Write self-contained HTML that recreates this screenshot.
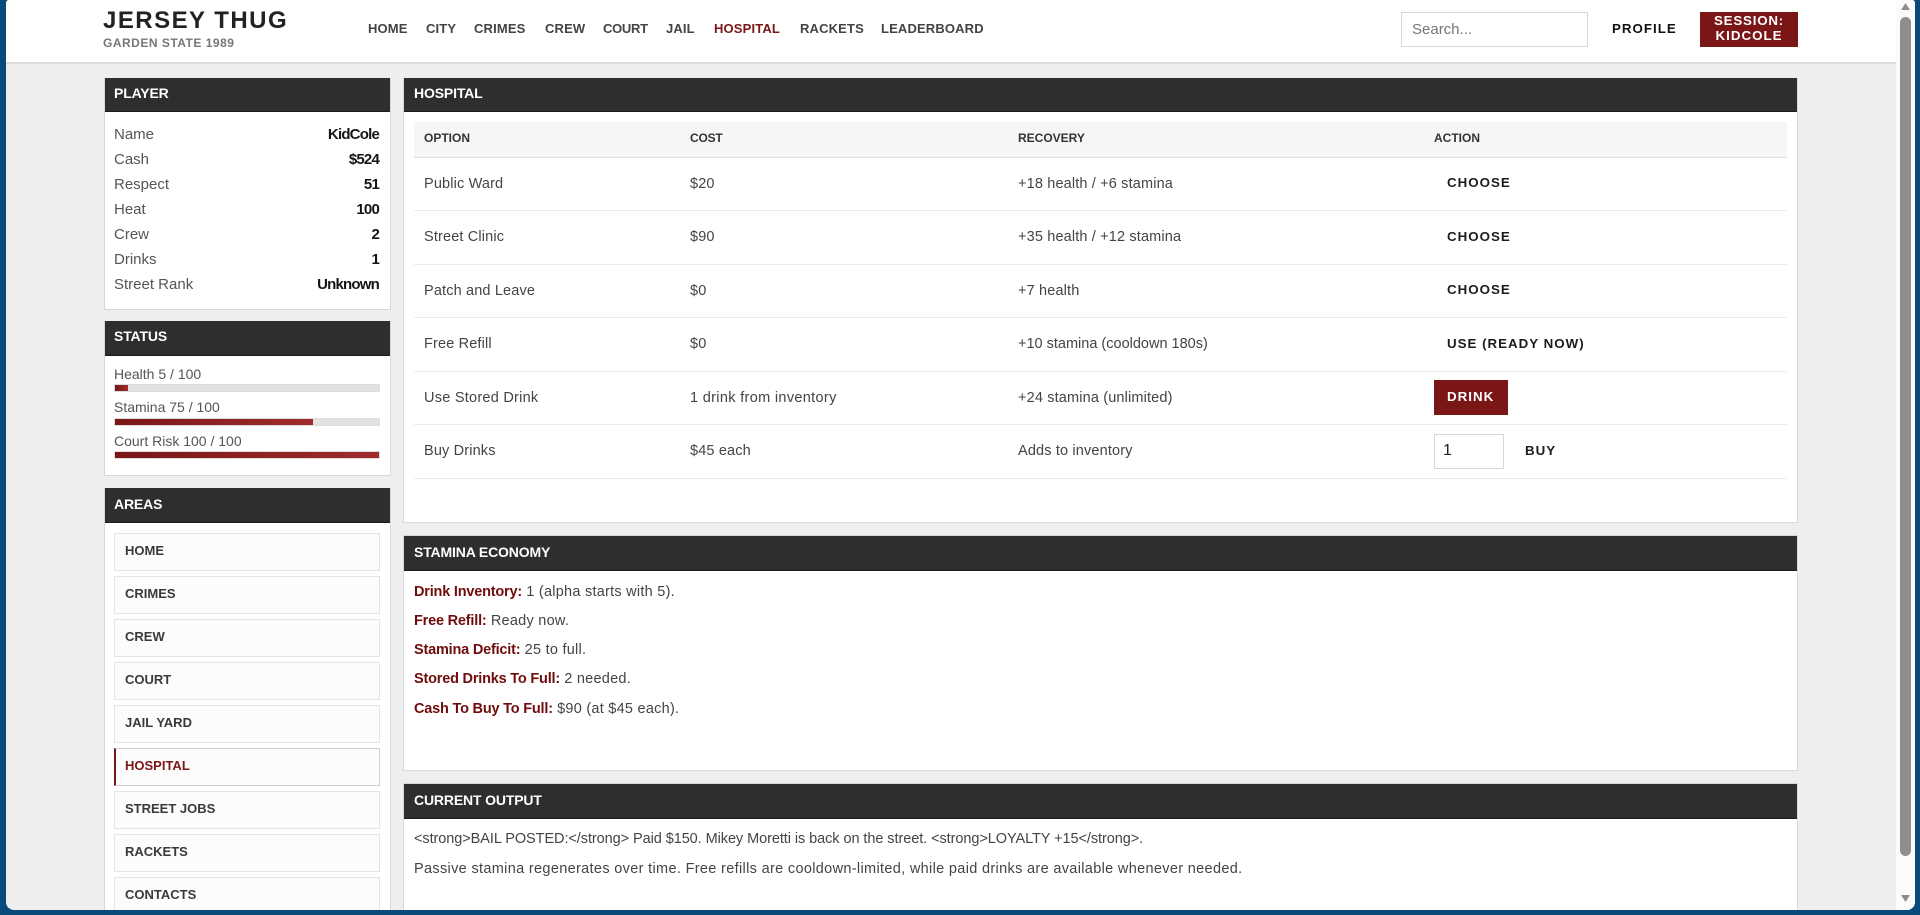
<!DOCTYPE html>
<html><head><meta charset="utf-8"><title>Jersey Thug</title>
<style>
*{box-sizing:border-box}
html,body{margin:0;padding:0;width:1920px;height:915px;overflow:hidden;background:#0a4a7a}
body{position:relative;font-family:"Liberation Sans",sans-serif;color:#444;font-size:15px}
#w{position:absolute;left:6px;top:0;width:1909px;height:910px;background:#eee;border-radius:3px 3px 8px 8px;overflow:hidden}
#c{position:absolute;left:-6px;top:0;width:1920px;height:910px}
#c div,#c span.a{position:absolute}
.t{line-height:20px;height:20px;white-space:nowrap}
.r{text-align:right;width:200px}
.p{background:#fff;border:1px solid #d8d8d8}
.h{background:#2e2e2e;border-bottom:1px solid #1a1a1a}
.ht{color:#fff;font-weight:bold;font-size:14px;letter-spacing:-.15px}
.n{font-weight:bold;font-size:13px;letter-spacing:.15px;color:#444}
.b{font-weight:bold;font-size:15px;letter-spacing:-.8px;color:#151515}
.th{font-weight:bold;font-size:12px;color:#333}
.ln{background:#ececec;height:1px;left:414px;width:1373px}
.act{font-weight:bold;font-size:13.33px;letter-spacing:1px;color:#1c1c1c}
.ar{left:114px;width:266px;height:38px;background:#fcfcfc;border:1px solid #e4e4e4}
.at{left:125px;font-weight:bold;font-size:13px;color:#3a3a3a}
.bar{left:114px;width:266px;height:8px;background:#e2e2e2;border:1px solid #ddd}
.fill{left:115px;height:6px;background:linear-gradient(90deg,#7a1616,#a02c2c)}
.x{font-size:14.5px;letter-spacing:.15px}
b{color:#6f0d0d;letter-spacing:-.2px}
</style></head><body>
<div id="w"><div id="c">
<div style="left:0;top:0;width:1920px;height:64px;background:#fff;border-bottom:2px solid #dcdcdc"></div>

<div class="t" style="left:103px;top:11px;font-size:24px;font-weight:bold;letter-spacing:1.47px;color:#222">JERSEY THUG</div>
<div class="t" style="left:103px;top:33px;font-size:12px;font-weight:bold;letter-spacing:.5px;color:#777">GARDEN STATE 1989</div>

<div class="t n" style="left:368px;top:19px">HOME</div>
<div class="t n" style="left:426px;top:19px">CITY</div>
<div class="t n" style="left:474px;top:19px">CRIMES</div>
<div class="t n" style="left:545px;top:19px">CREW</div>
<div class="t n" style="left:603px;top:19px;letter-spacing:-.3px">COURT</div>
<div class="t n" style="left:666px;top:19px">JAIL</div>
<div class="t n" style="left:714px;top:19px;color:#7a1616">HOSPITAL</div>
<div class="t n" style="left:800px;top:19px">RACKETS</div>
<div class="t n" style="left:881px;top:19px">LEADERBOARD</div>

<div style="left:1401px;top:12px;width:187px;height:35px;background:#fff;border:1px solid #d8d8d8"></div>
<div class="t" style="left:1412px;top:20px;font-size:15px;color:#757575">Search...</div>
<div class="t act" style="left:1612px;top:19px;color:#111">PROFILE</div>
<div style="left:1700px;top:12px;width:98px;height:35px;background:#7a1616"></div>
<div class="t act" style="left:1700px;top:11px;width:98px;text-align:center;color:#fff;letter-spacing:.8px">SESSION:</div>
<div class="t act" style="left:1700px;top:26px;width:98px;text-align:center;color:#fff">KIDCOLE</div>

<!-- PLAYER -->
<div class="p" style="left:104px;top:78px;width:287px;height:232px"></div>
<div class="h" style="left:105px;top:78px;width:285px;height:34px"></div>
<div class="t ht" style="left:114px;top:83px">PLAYER</div>
<div class="t" style="left:114px;top:125px;color:#555">Name</div><div class="t r b" style="left:179px;top:125px">KidCole</div>
<div class="t" style="left:114px;top:150px;color:#555">Cash</div><div class="t r b" style="left:179px;top:150px">$524</div>
<div class="t" style="left:114px;top:175px;color:#555">Respect</div><div class="t r b" style="left:179px;top:175px">51</div>
<div class="t" style="left:114px;top:200px;color:#555">Heat</div><div class="t r b" style="left:179px;top:200px">100</div>
<div class="t" style="left:114px;top:225px;color:#555">Crew</div><div class="t r b" style="left:179px;top:225px">2</div>
<div class="t" style="left:114px;top:250px;color:#555">Drinks</div><div class="t r b" style="left:179px;top:250px">1</div>
<div class="t" style="left:114px;top:275px;color:#555">Street Rank</div><div class="t r b" style="left:179px;top:275px">Unknown</div>

<!-- STATUS -->
<div class="p" style="left:104px;top:321px;width:287px;height:155px"></div>
<div class="h" style="left:105px;top:321px;width:285px;height:35px"></div>
<div class="t ht" style="left:114px;top:326px">STATUS</div>
<div class="t" style="left:114px;top:364px;font-size:14px;color:#555">Health 5 / 100</div>
<div class="bar" style="top:384px"></div><div class="fill" style="top:385px;width:13px"></div>
<div class="t" style="left:114px;top:397px;font-size:14px;color:#555">Stamina 75 / 100</div>
<div class="bar" style="top:418px"></div><div class="fill" style="top:419px;width:198px"></div>
<div class="t" style="left:114px;top:431px;font-size:14px;color:#555">Court Risk 100 / 100</div>
<div class="bar" style="top:451px"></div><div class="fill" style="top:452px;width:264px"></div>

<!-- AREAS -->
<div class="p" style="left:104px;top:488px;width:287px;height:440px"></div>
<div class="h" style="left:105px;top:488px;width:285px;height:35px"></div>
<div class="t ht" style="left:114px;top:494px">AREAS</div>
<div class="ar" style="top:533px"></div><div class="t at" style="top:541px">HOME</div>
<div class="ar" style="top:576px"></div><div class="t at" style="top:584px">CRIMES</div>
<div class="ar" style="top:619px"></div><div class="t at" style="top:627px">CREW</div>
<div class="ar" style="top:662px"></div><div class="t at" style="top:670px">COURT</div>
<div class="ar" style="top:705px"></div><div class="t at" style="top:713px">JAIL YARD</div>
<div class="ar" style="top:748px;border-color:#cfcfcf;border-left:2px solid #7a1616"></div><div class="t at" style="top:756px;color:#7a1616">HOSPITAL</div>
<div class="ar" style="top:791px"></div><div class="t at" style="top:799px">STREET JOBS</div>
<div class="ar" style="top:834px"></div><div class="t at" style="top:842px">RACKETS</div>
<div class="ar" style="top:877px"></div><div class="t at" style="top:885px">CONTACTS</div>

<!-- HOSPITAL -->
<div class="p" style="left:403px;top:78px;width:1395px;height:445px"></div>
<div class="h" style="left:404px;top:78px;width:1393px;height:34px"></div>
<div class="t ht" style="left:414px;top:83px">HOSPITAL</div>
<div style="left:414px;top:122px;width:1373px;height:36px;background:#f6f6f6;border-bottom:1px solid #dcdcdc"></div>
<div class="t th" style="left:424px;top:128px">OPTION</div>
<div class="t th" style="left:690px;top:128px;letter-spacing:-.2px">COST</div>
<div class="t th" style="left:1018px;top:128px">RECOVERY</div>
<div class="t th" style="left:1434px;top:128px">ACTION</div>

<div class="t x" style="left:424px;top:174px">Public Ward</div>
<div class="t x" style="left:690px;top:174px">$20</div>
<div class="t x" style="left:1018px;top:174px">+18 health / +6 stamina</div>
<div class="t act" style="left:1447px;top:173px">CHOOSE</div>
<div class="ln" style="top:210px"></div>

<div class="t x" style="left:424px;top:227px">Street Clinic</div>
<div class="t x" style="left:690px;top:227px">$90</div>
<div class="t x" style="left:1018px;top:227px">+35 health / +12 stamina</div>
<div class="t act" style="left:1447px;top:227px">CHOOSE</div>
<div class="ln" style="top:264px"></div>

<div class="t x" style="left:424px;top:281px">Patch and Leave</div>
<div class="t x" style="left:690px;top:281px">$0</div>
<div class="t x" style="left:1018px;top:281px">+7 health</div>
<div class="t act" style="left:1447px;top:280px">CHOOSE</div>
<div class="ln" style="top:317px"></div>

<div class="t x" style="left:424px;top:334px">Free Refill</div>
<div class="t x" style="left:690px;top:334px">$0</div>
<div class="t x" style="left:1018px;top:334px;letter-spacing:0">+10 stamina (cooldown 180s)</div>
<div class="t act" style="left:1447px;top:334px">USE (READY NOW)</div>
<div class="ln" style="top:371px"></div>

<div class="t x" style="left:424px;top:388px;letter-spacing:.25px">Use Stored Drink</div>
<div class="t x" style="left:690px;top:388px;letter-spacing:.33px">1 drink from inventory</div>
<div class="t x" style="left:1018px;top:388px">+24 stamina (unlimited)</div>
<div style="left:1434px;top:380px;width:74px;height:35px;background:#7a1616"></div>
<div class="t act" style="left:1447px;top:387px;color:#fff">DRINK</div>
<div class="ln" style="top:424px"></div>

<div class="t x" style="left:424px;top:441px">Buy Drinks</div>
<div class="t x" style="left:690px;top:441px">$45 each</div>
<div class="t x" style="left:1018px;top:441px">Adds to inventory</div>
<div style="left:1434px;top:434px;width:70px;height:35px;background:#fff;border:1px solid #d8d8d8"></div>
<div class="t" style="left:1443px;top:441px;font-size:16px;color:#222">1</div>
<div class="t act" style="left:1525px;top:441px">BUY</div>
<div class="ln" style="top:478px"></div>

<!-- STAMINA -->
<div class="p" style="left:403px;top:535px;width:1395px;height:236px"></div>
<div class="h" style="left:404px;top:536px;width:1393px;height:35px"></div>
<div class="t ht" style="left:414px;top:542px">STAMINA ECONOMY</div>
<div class="t x" style="left:414px;top:582px;letter-spacing:.25px"><b>Drink Inventory:</b> 1 (alpha starts with 5).</div>
<div class="t x" style="left:414px;top:611px;letter-spacing:.25px"><b>Free Refill:</b> Ready now.</div>
<div class="t x" style="left:414px;top:640px;letter-spacing:.25px"><b>Stamina Deficit:</b> 25 to full.</div>
<div class="t x" style="left:414px;top:669px;letter-spacing:.25px"><b>Stored Drinks To Full:</b> 2 needed.</div>
<div class="t x" style="left:414px;top:699px;letter-spacing:.25px"><b>Cash To Buy To Full:</b> $90 (at $45 each).</div>

<!-- OUTPUT -->
<div class="p" style="left:403px;top:783px;width:1395px;height:160px"></div>
<div class="h" style="left:404px;top:784px;width:1393px;height:35px"></div>
<div class="t ht" style="left:414px;top:790px">CURRENT OUTPUT</div>
<div class="t x" style="left:414px;top:829px;letter-spacing:-.07px">&lt;strong&gt;BAIL POSTED:&lt;/strong&gt; Paid $150. Mikey Moretti is back on the street. &lt;strong&gt;LOYALTY +15&lt;/strong&gt;.</div>
<div class="t x" style="left:414px;top:859px;letter-spacing:.33px">Passive stamina regenerates over time. Free refills are cooldown-limited, while paid drinks are available whenever needed.</div>

<!-- SCROLLBAR -->
<div style="left:1896px;top:0;width:19px;height:910px;background:#fbfbfb"></div>
<div style="left:1900px;top:17px;width:11px;height:839px;background:#8e8e8e;border-radius:6px"></div>
<svg style="position:absolute;left:1901px;top:3px" width="9" height="7"><path d="M4.5 0 L9 7 L0 7 Z" fill="#8e8e8e"/></svg>
<svg style="position:absolute;left:1901px;top:895px" width="9" height="7"><path d="M0 0 L9 0 L4.5 7 Z" fill="#8e8e8e"/></svg>
</div></div>
</body></html>
